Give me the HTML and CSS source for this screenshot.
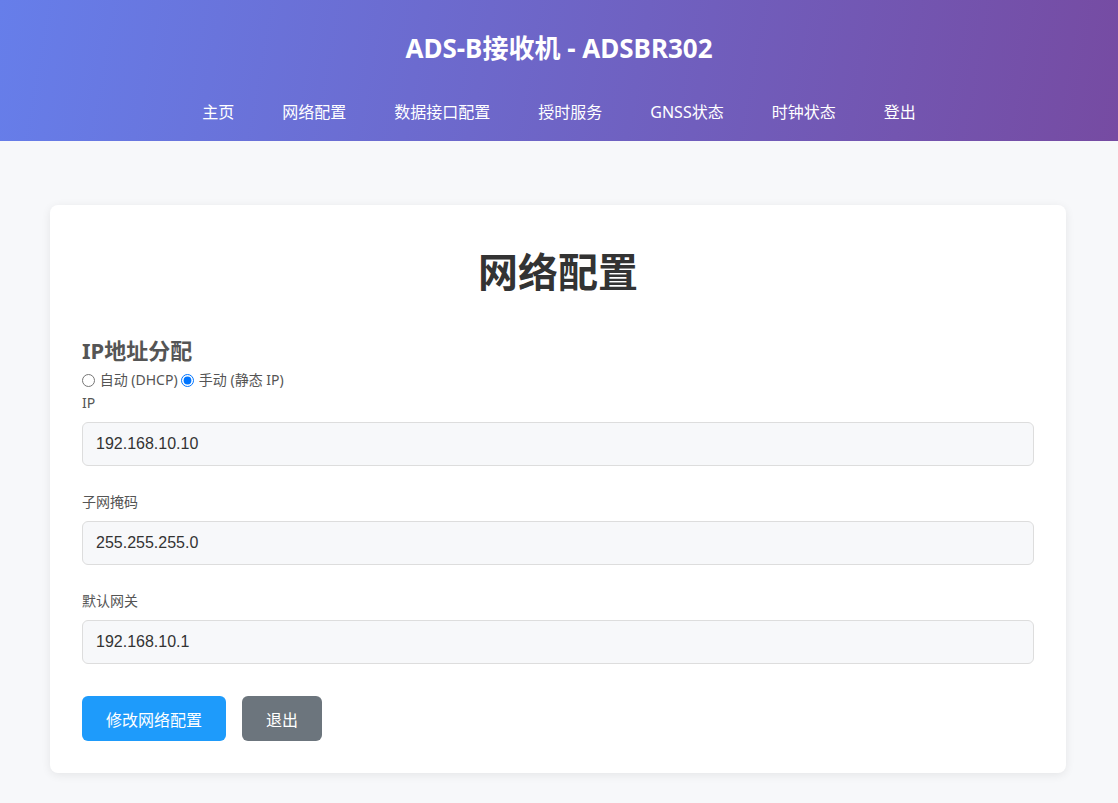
FILE: index.html
```html
<!DOCTYPE html>
<html lang="zh-CN">
<head>
    <meta charset="UTF-8">
    <meta name="viewport" content="width=device-width, initial-scale=1.0">
    <title>网络配置</title>
    <link rel="stylesheet" href="styles.css">
</head>
<body>

<!-- Header -->
<header>
    <h1 class="site-title">ADS-B接收机 - ADSBR302</h1>
    <nav>
        <a href="#">主页</a>
        <a href="#">网络配置</a>
        <a href="#">数据接口配置</a>
        <a href="#">授时服务</a>
        <a href="#">GNSS状态</a>
        <a href="#">时钟状态</a>
        <a href="#">登出</a>
    </nav>
</header>

<!-- Network config -->
<div class="container">
    <div class="card">
        <h2 class="card-title">网络配置</h2>
        <form>
            <h3 class="section-title">IP地址分配</h3>
            <div class="radio-row">
                <label><input type="radio" name="mode" value="dhcp"> 自动 (DHCP)</label>
                <label><input type="radio" name="mode" value="static" checked> 手动 (静态 IP)</label>
            </div>
            <div class="form-group">
                <label class="field-label" for="ip">IP</label>
                <input type="text" id="ip" value="192.168.10.10">
            </div>
            <div class="form-group">
                <label class="field-label" for="mask">子网掩码</label>
                <input type="text" id="mask" value="255.255.255.0">
            </div>
            <div class="form-group">
                <label class="field-label" for="gw">默认网关</label>
                <input type="text" id="gw" value="192.168.10.1">
            </div>
            <div class="actions">
                <button type="button" class="btn btn-primary">修改网络配置</button>
                <button type="button" class="btn btn-secondary">退出</button>
            </div>
        </form>
    </div>
</div>

</body>
</html>
```

FILE: styles.css
```css
* {
    margin: 0;
    padding: 0;
    box-sizing: border-box;
}
body {
    font-family: "Noto Sans", "Noto Sans CJK SC", sans-serif;
    background-color: #f7f8fa;
    color: #333;
}
header {
    background: linear-gradient(100deg, #667eea 0%, #764ba2 100%);
    color: white;
    height: 141px;
    padding-top: 30px;
    text-align: center;
}
.site-title {
    font-size: 26px;
    font-weight: bold;
    line-height: 36px;
}
header nav {
    display: flex;
    justify-content: center;
    gap: 48px;
    margin-top: 34px;
}
header nav a {
    color: white;
    text-decoration: none;
    font-size: 16px;
    line-height: 24px;
}
.container {
    margin: 64px 52px 30px 50px;
}
.card {
    background-color: white;
    border-radius: 8px;
    padding: 32px;
    box-shadow: 0 2px 10px rgba(0, 0, 0, 0.08);
}
.card-title {
    text-align: center;
    font-size: 40px;
    font-weight: bold;
    line-height: 56px;
    margin-top: 7px;
    margin-bottom: 36px;
    color: #333;
}
.section-title {
    font-size: 22px;
    font-weight: bold;
    color: #555;
    line-height: 28px;
    margin-bottom: 6px;
}
.radio-row {
    font-size: 14px;
    color: #555;
    line-height: 20px;
}
.radio-row input {
    width: 13px;
    height: 13px;
    vertical-align: -2px;
    margin: 0 1px 0 0;
}
.form-group {
    margin-bottom: 26px;
}
.radio-row + .form-group {
    margin-top: 3px;
}
.field-label {
    display: block;
    font-size: 14px;
    line-height: 20px;
    color: #555;
    margin-bottom: 9px;
}
.form-group input[type="text"] {
    width: 100%;
    height: 44px;
    padding: 0 13px;
    font-family: "Liberation Sans", Arial, sans-serif;
    font-size: 16px;
    color: #333;
    background-color: #f7f8fa;
    border: 1px solid #ddd;
    border-radius: 6px;
    outline: none;
}
.actions {
    display: flex;
    gap: 16px;
    margin-top: 32px;
}
.btn {
    border: none;
    border-radius: 6px;
    color: white;
    font-family: "Noto Sans CJK SC", sans-serif;
    font-size: 16px;
    height: 45px;
    padding: 0 24px;
    cursor: pointer;
}
.btn-primary {
    background-color: #1e9bfb;
}
.btn-secondary {
    background-color: #6c757d;
}
```
